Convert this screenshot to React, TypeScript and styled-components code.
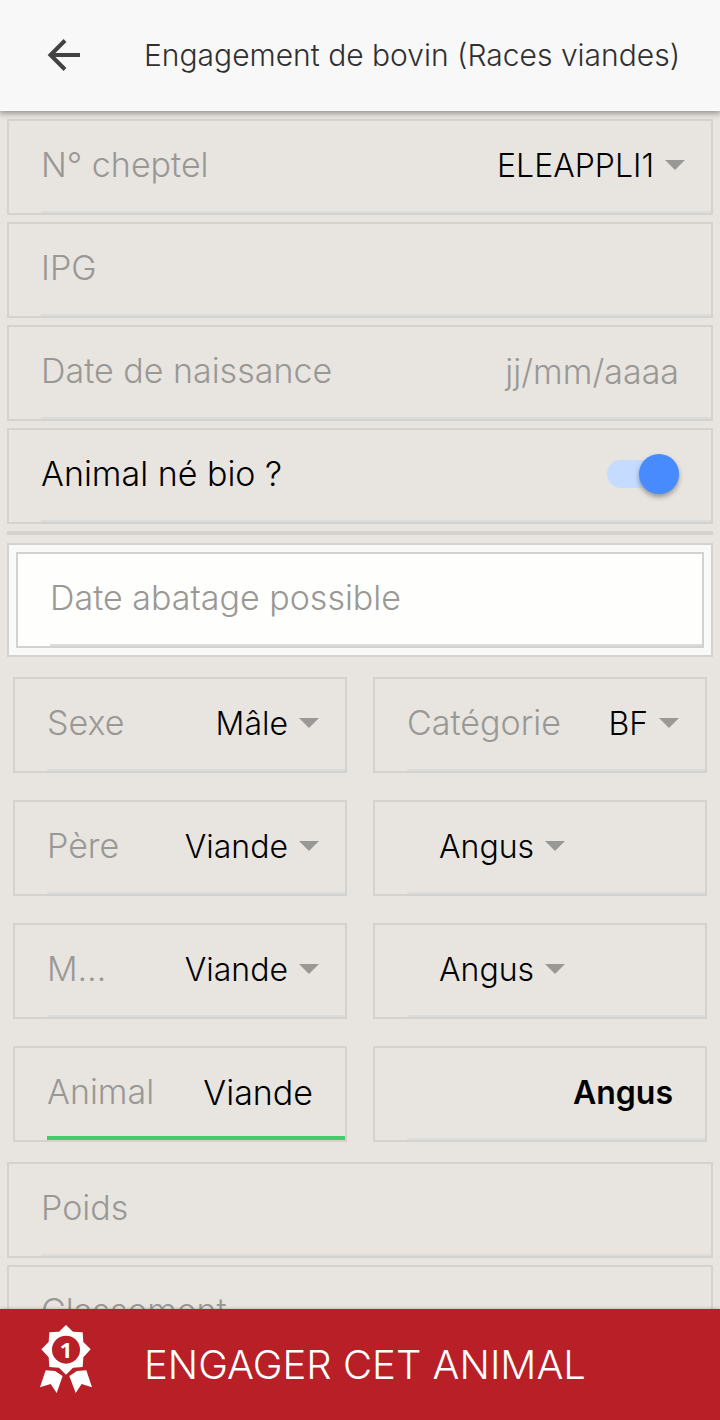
import React, { useId, useState } from "react";
import styled, { createGlobalStyle } from "styled-components";

const line = "#d3d2cf";
const muted = "#999895";

const GlobalStyle = createGlobalStyle`
  *, *::before, *::after { box-sizing: border-box; }
  body {
    margin: 0;
    background: #e8e5e1;
    color: #000;
    font-family: Inter, "Liberation Sans", sans-serif;
    font-size: 34px;
    font-weight: 300;
  }
  button, input, select { font: inherit; color: inherit; }
`;

const Screen = styled.div`
  display: flex;
  flex-direction: column;
  height: 100vh;
`;

const Header = styled.header`
  position: relative;
  z-index: 1;
  flex: none;
  display: flex;
  align-items: center;
  gap: 60px;
  padding: 35px 44px 36px;
  background: #f8f8f8;
  box-shadow: 0 1px 6px 1px rgba(0, 0, 0, 0.4);
`;

const BackButton = styled.button`
  flex: none;
  display: flex;
  padding: 0;
  border: 0;
  background: none;
  color: #424242;
`;

const Title = styled.h1`
  margin: 0;
  color: #303030;
  font-size: 30px;
  font-weight: 300;
  line-height: 40px;
  white-space: nowrap;
`;

const Form = styled.main`
  flex: 1;
  min-height: 0;
  display: flex;
  flex-direction: column;
  gap: 7px;
  padding: 8px 7px;
  overflow-y: auto;
  scrollbar-width: none;
`;

const FieldBox = styled.div<{ $white?: boolean; $active?: boolean }>`
  flex: none;
  position: relative;
  display: flex;
  align-items: center;
  min-width: 0;
  height: 96px;
  padding: 0 32px 4px;
  border: 2px solid ${line};
  background: ${(p) => (p.$white ? "#fefefd" : "transparent")};

  &::after {
    content: "";
    position: absolute;
    right: 0;
    bottom: 0;
    left: 32px;
    height: ${(p) => (p.$active ? "4px" : "2px")};
    background: ${(p) => (p.$active ? "#45cc6a" : "#dcdcda")};
  }
`;

const Label = styled.label<{ $dark?: boolean }>`
  flex: none;
  color: ${(p) => (p.$dark ? "#000" : muted)};
  line-height: 40px;
  white-space: nowrap;
`;

const TextInput = styled.input<{ $bold?: boolean }>`
  flex: 1;
  min-width: 0;
  height: 40px;
  padding: 0;
  border: 0;
  outline: 0;
  background: none;
  text-align: right;
  font-size: ${(p) => (p.$bold ? "32px" : "34px")};
  font-weight: ${(p) => (p.$bold ? 600 : 300)};

  &::placeholder {
    color: ${muted};
    opacity: 1;
  }
`;

const SelectWrap = styled.div<{ $start?: boolean }>`
  flex: none;
  display: flex;
  align-items: center;
  gap: 11px;
  margin: ${(p) => (p.$start ? "0 auto 0 32px" : "0 -6px 0 auto")};
`;

const SelectInput = styled.select`
  appearance: none;
  field-sizing: content;
  height: 40px;
  padding: 0;
  border: 0;
  outline: 0;
  background: none;
  font-size: 32px;
`;

const Toggle = styled.input`
  appearance: none;
  position: relative;
  flex: none;
  width: 72px;
  height: 28px;
  margin: 0 0 0 auto;
  border-radius: 14px;
  background: ${(p) => (p.checked ? "#c5dbff" : "#c9c7c7")};

  &::before {
    content: "";
    position: absolute;
    top: -6px;
    ${(p) => (p.checked ? "right: 0;" : "left: 0;")}
    width: 40px;
    height: 40px;
    border-radius: 50%;
    background: ${(p) => (p.checked ? "#488aff" : "#fff")};
    box-shadow: 0 3px 5px rgba(0, 0, 0, 0.35);
  }
`;

const Divider = styled.hr`
  flex: none;
  width: 100%;
  height: 4px;
  margin: 0;
  border: 0;
  background: ${line};
`;

const WhiteCard = styled.div`
  flex: none;
  margin-top: 1px;
  padding: 7px;
  border: 2px solid ${line};
  background: #f9f9f7;
`;

const Pairs = styled.div`
  flex: none;
  display: grid;
  grid-template-columns: 1fr 1fr;
  gap: 27px 26px;
  padding: 13px 6px;
`;

const SubmitButton = styled.button`
  position: relative;
  z-index: 1;
  flex: none;
  display: flex;
  align-items: center;
  gap: 51px;
  height: 111px;
  padding: 0 39px;
  border: 0;
  background: #b91f27;
  color: #fff;
  font-size: 40px;
  box-shadow: 0 0 3px rgba(0, 0, 0, 0.3);
  white-space: nowrap;
`;

const RosetteIcon = styled.svg`
  flex: none;
  margin-bottom: 12px;
`;

function BackArrow() {
  return (
    <svg width="40" height="40" viewBox="0 0 40 40" fill="none" stroke="currentColor" strokeWidth="4" aria-hidden="true">
      <path d="M36 20H7M21 5.500L6.500 20L21 34.500" />
    </svg>
  );
}

function Caret() {
  return (
    <svg width="20" height="10" viewBox="0 0 20 10" fill="#999895" aria-hidden="true">
      <path d="M0 0H20L10 10Z" />
    </svg>
  );
}

function Rosette() {
  return (
    <RosetteIcon width="54" height="70" viewBox="0 0 162 210" fill="#fff" aria-hidden="true">
      <path d="M81 3L102 23L131 25L133 54L155 76L133 100L131 129L102 131L81 152L60 131L31 129L29 100L7 76L29 54L31 25L60 23Z" />
      <circle cx="81" cy="77" r="42" fill="#b91f27" />
      <path d="M20 139L48 141L71 156L53 207L35 180L3 190Z" />
      <path d="M142 139L114 141L91 156L110 207L128 180L159 190Z" />
      <text x="81" y="101" textAnchor="middle" fontFamily="Open Sans, sans-serif" fontSize="66" fontWeight="700">1</text>
    </RosetteIcon>
  );
}

type InputProps = {
  label?: string;
  name?: string;
  value?: string;
  placeholder?: string;
  white?: boolean;
  active?: boolean;
  bold?: boolean;
};

function InputField({ label, name, value = "", placeholder, white, active, bold }: InputProps) {
  const id = useId();
  const [text, setText] = useState(value);
  return (
    <FieldBox $white={white} $active={active}>
      {label && <Label htmlFor={id}>{label}</Label>}
      <TextInput
        id={id}
        aria-label={name}
        placeholder={placeholder}
        value={text}
        $bold={bold}
        onChange={(e) => setText(e.target.value)}
      />
    </FieldBox>
  );
}

function SelectField({ label, name, value }: { label?: string; name?: string; value: string }) {
  const id = useId();
  return (
    <FieldBox>
      {label && <Label htmlFor={id}>{label}</Label>}
      <SelectWrap $start={!label}>
        <SelectInput id={id} aria-label={name} defaultValue={value}>
          <option>{value}</option>
        </SelectInput>
        <Caret />
      </SelectWrap>
    </FieldBox>
  );
}

function ToggleField({ label }: { label: string }) {
  const id = useId();
  const [on, setOn] = useState(true);
  return (
    <FieldBox>
      <Label htmlFor={id} $dark>{label}</Label>
      <Toggle id={id} type="checkbox" checked={on} onChange={(e) => setOn(e.target.checked)} />
    </FieldBox>
  );
}

export default function App() {
  return (
    <Screen>
      <GlobalStyle />
      <Header>
        <BackButton type="button" aria-label="Retour">
          <BackArrow />
        </BackButton>
        <Title>Engagement de bovin (Races viandes)</Title>
      </Header>
      <Form>
        <SelectField label="N° cheptel" value="ELEAPPLI1" />
        <InputField label="IPG" />
        <InputField label="Date de naissance" placeholder="jj/mm/aaaa" />
        <ToggleField label="Animal né bio ?" />
        <Divider />
        <WhiteCard>
          <InputField label="Date abatage possible" white />
        </WhiteCard>
        <Pairs>
          <SelectField label="Sexe" value="Mâle" />
          <SelectField label="Catégorie" value="BF" />
          <SelectField label="Père" value="Viande" />
          <SelectField name="Race du père" value="Angus" />
          <SelectField label="M…" name="Mère" value="Viande" />
          <SelectField name="Race de la mère" value="Angus" />
          <InputField label="Animal" value="Viande" active />
          <InputField name="Race de l'animal" value="Angus" bold />
        </Pairs>
        <InputField label="Poids" />
        <InputField label="Classement" />
      </Form>
      <SubmitButton type="button">
        <Rosette />
        ENGAGER CET ANIMAL
      </SubmitButton>
    </Screen>
  );
}
